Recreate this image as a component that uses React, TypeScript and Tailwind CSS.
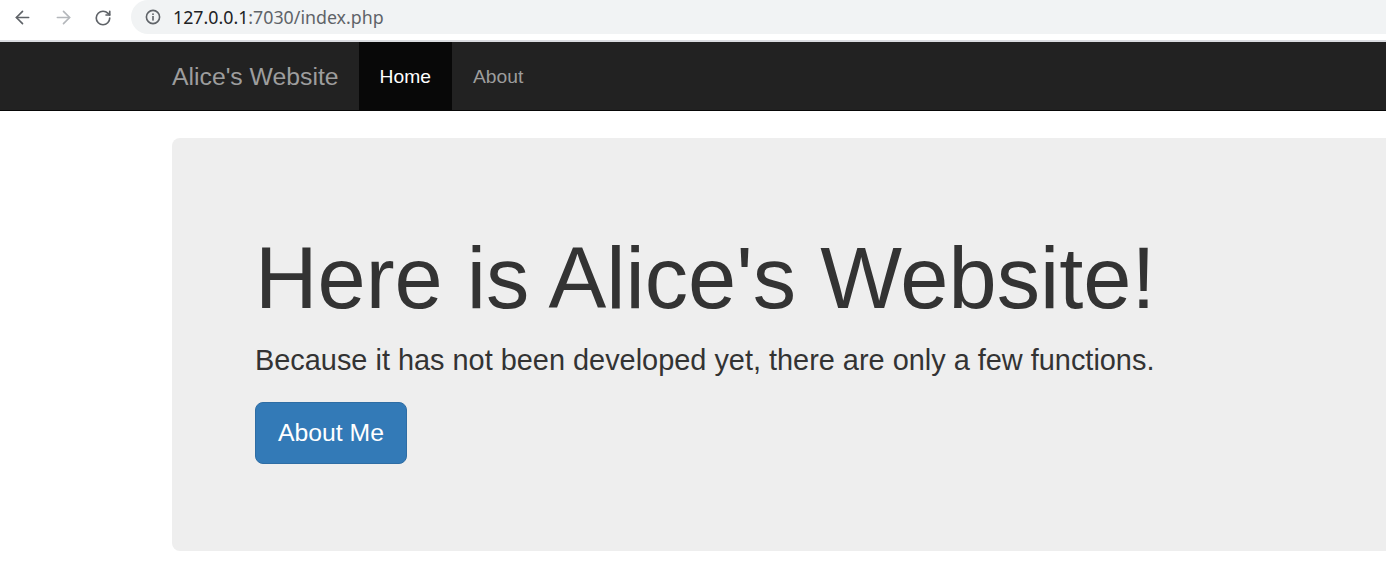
import React from 'react';
import { ArrowLeft, ArrowRight, RotateCw } from 'lucide-react';

const InfoIcon = () => (
  <svg width="16" height="16" viewBox="0 0 16 16" fill="none">
    <circle cx="8" cy="8" r="6.6" stroke="#5f6368" strokeWidth="1.6" />
    <rect x="7.2" y="7" width="1.6" height="4.6" fill="#5f6368" />
    <rect x="7.2" y="4.4" width="1.6" height="1.6" fill="#5f6368" />
  </svg>
);

const BrowserBar = () => (
  <div className="h-[40px] flex items-start bg-white">
    <div className="h-[35px] flex items-center">
      <ArrowLeft className="ml-[12px]" size={21} color="#5f6368" strokeWidth={1.9} />
      <ArrowRight className="ml-[20px]" size={21} color="#b4b7bb" strokeWidth={1.9} />
      <RotateCw className="ml-[20px]" size={18} color="#5f6368" strokeWidth={2.2} />
    </div>
    <div className="ml-[19px] h-[34px] flex-1 rounded-l-full bg-[#f1f3f4] flex items-center pl-[14px]">
      <InfoIcon />
      <span className="ml-[12px] text-[17.8px] font-['Noto_Sans','Liberation_Sans',sans-serif] text-[#202124]">
        127.0.0.1<span className="text-[#5f6368]">:7030/index.php</span>
      </span>
    </div>
  </div>
);

const App = () => {
  return (
    <div className="w-[1386px] h-[581px] overflow-hidden bg-white font-['Liberation_Sans',Arial,sans-serif]">
      <BrowserBar />
      <div className="h-[2px] bg-[#dadce0]" />

      <nav className="h-[69px] bg-[#222] border-b border-[#080808] flex pl-[172px]">
        <a className="text-[24.75px] text-[#9d9d9d] pr-[20px] pt-[2px] flex items-center leading-none">
          Alice's Website
        </a>
        <ul className="flex">
          <li className="bg-[#080808] text-white text-[19.25px] px-[21px] pt-[2px] flex items-center">Home</li>
          <li className="text-[#9d9d9d] text-[19.25px] px-[21px] pt-[2px] flex items-center">About</li>
        </ul>
      </nav>

      <div className="mt-[27px] ml-[172px] w-[1300px] h-[413px] rounded-[8px] bg-[#eee] pl-[83px] pt-[66px] text-[#333]">
        <h1 className="mt-[27px] text-[86.6px] leading-[95px] mb-[14px]">Here is Alice's Website!</h1>
        <p className="text-[28.9px] leading-[41px] mb-[21px]">
          Because it has not been developed yet, there are only a few functions.
        </p>
        <button className="h-[62px] px-[22px] rounded-[8px] bg-[#337ab7] border border-[#2e6da4] text-white text-[24.75px] leading-none">
          About Me
        </button>
      </div>
    </div>
  );
};

export default App;
